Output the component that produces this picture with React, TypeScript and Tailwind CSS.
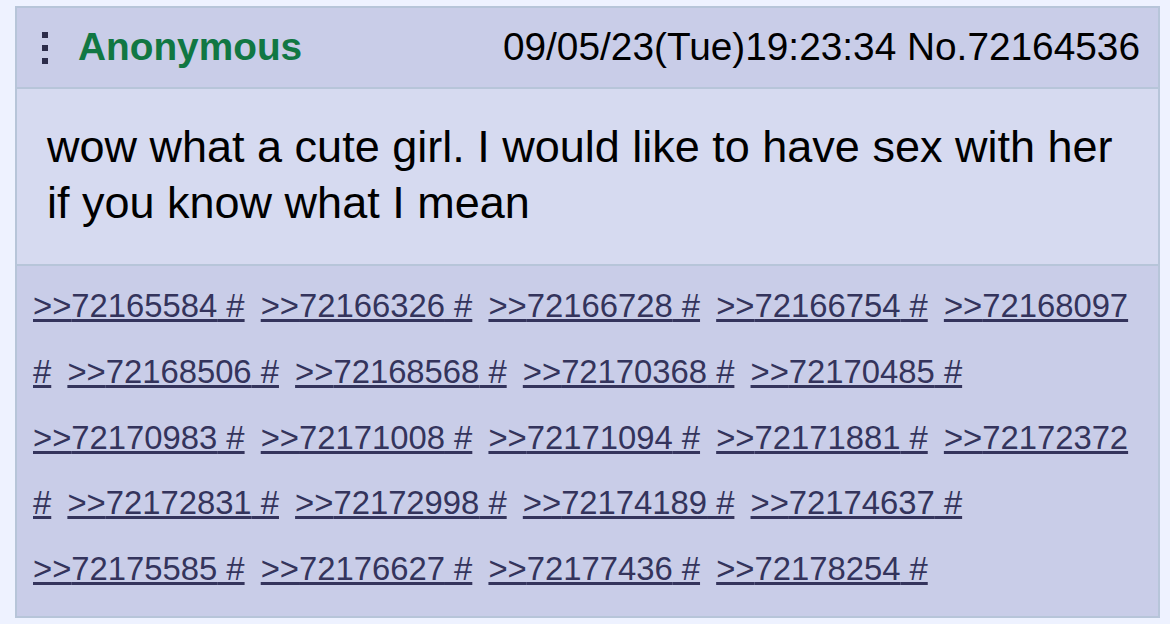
const REPLIES = [
  "72165584", "72166326", "72166728", "72166754", "72168097",
  "72168506", "72168568", "72170368", "72170485",
  "72170983", "72171008", "72171094", "72171881", "72172372",
  "72172831", "72172998", "72174189", "72174637",
  "72175585", "72176627", "72177436", "72178254",
];

function Dots() {
  return (
    <div className="flex flex-col gap-[7px]">
      <div className="w-[6px] h-[6px] bg-[#2c2c4a]" />
      <div className="w-[6px] h-[6px] bg-[#2c2c4a]" />
      <div className="w-[6px] h-[6px] bg-[#2c2c4a]" />
    </div>
  );
}

export default function App() {
  return (
    <div className="min-h-[624px] bg-[#eef2ff] pt-[6px] pl-[15px] font-['Liberation_Sans',Arial,sans-serif]">
      <div className="w-[1145px] border-2 border-[#b7c5d9]">
        {/* post header */}
        <div className="h-[81px] bg-[#c9cde8] border-b-2 border-[#b7c5d9] flex items-center pl-[25px] pr-[18px]">
          <Dots />
          <span className="ml-[30px] text-[38.8px] font-bold text-[#117743] leading-none">
            Anonymous
          </span>
          <span className="ml-auto text-[38.8px] text-black leading-none">
            09/05/23(Tue)19:23:34 No.72164536
          </span>
        </div>

        {/* post body */}
        <div className="h-[177px] bg-[#d6daf0] border-b-2 border-[#b7c5d9] pl-[30px] pr-[20px] pt-[30px] text-[45px] leading-[56px] text-black">
          wow what a cute girl. I would like to have sex with her if you know what I mean
        </div>

        {/* backlinks */}
        <div className="bg-[#c9cde8] pl-[16px] pr-[15px] pt-[7px] pb-[14px] text-[32.8px] leading-[65.75px] text-[#34345c]">
          {REPLIES.map((id) => (
            <span key={id}>
              <a className="underline mr-[7px] cursor-pointer">&gt;&gt;{id} #</a>{" "}
            </span>
          ))}
        </div>
      </div>
    </div>
  );
}
